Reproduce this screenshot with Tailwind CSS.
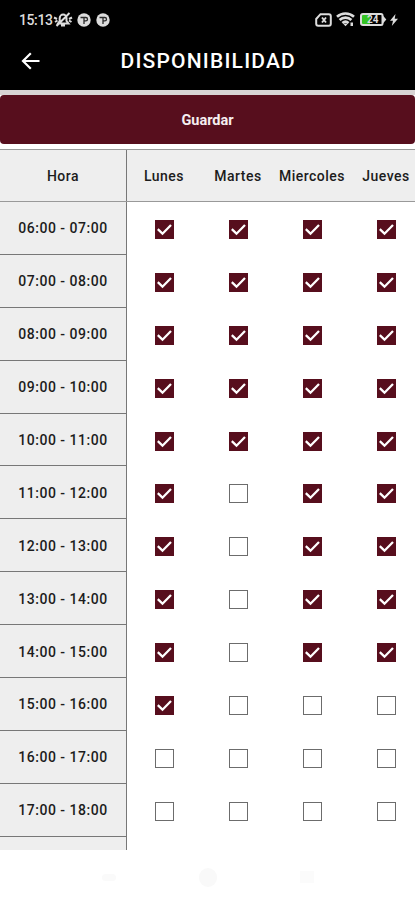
<!DOCTYPE html>
<html lang="es">
<head>
  <meta charset="UTF-8" />
  <meta name="viewport" content="width=device-width, initial-scale=1.0" />
  <title>Disponibilidad</title>
  <script src="https://cdn.jsdelivr.net/npm/@tailwindcss/browser@4"></script>
</head>
<body class="bg-white font-['Roboto',sans-serif] text-[#1c1c1c]">
  <div class="w-[415px] h-[900px] flex flex-col overflow-hidden">

    <!-- Status bar -->
    <div class="h-[39px] shrink-0 bg-black text-[#dcdcdc] flex items-center justify-between pl-[19px] pr-[17px]">
      <div class="flex items-center">
        <span class="w-[33px] text-[14px] leading-none font-medium tracking-[-0.4px] pt-[1px]">15:13</span>
        <svg class="ml-[1px] w-[20px] h-[17px]" viewBox="0 0 20 17" fill="none" stroke="currentColor" stroke-width="2">
          <path d="M5 12.500h10.500l-2-2.500V7a3.400 3.400 0 0 0-6.800 0v3zM8 14.600h4M3.500 15L16.500 2M1 6.500l3 1.500M2 11l2.500-1.500M19 6.500l-3 1.500M18.500 11L16 9.500" />
        </svg>
        <svg class="ml-[4px] w-[14px] h-[14px]" viewBox="0 0 14 14">
          <circle cx="7" cy="7" r="6.700" fill="currentColor" />
          <path d="M3.500 4.500h3.500v6.500M7 4.500h1.800a1.700 1.700 0 0 1 0 3.400H7" fill="none" stroke="#2a2a2a" stroke-width="1.300" />
        </svg>
        <svg class="ml-[5px] w-[14px] h-[14px]" viewBox="0 0 14 14">
          <circle cx="7" cy="7" r="6.700" fill="currentColor" />
          <path d="M3.500 4.500h3.500v6.500M7 4.500h1.800a1.700 1.700 0 0 1 0 3.400H7" fill="none" stroke="#2a2a2a" stroke-width="1.300" />
        </svg>
      </div>
      <div class="flex items-center">
        <svg class="w-[17px] h-[14px]" viewBox="0 0 17 14" fill="none" stroke="currentColor">
          <path d="M5.500 1.200h8.300a2 2 0 0 1 2 2v7.600a2 2 0 0 1-2 2H3.200a2 2 0 0 1-2-2V6z" stroke-width="2" />
          <path d="M7 4.500l4 5M11 4.500l-4 5" stroke-width="1.900" />
        </svg>
        <svg class="ml-[4px] w-[19px] h-[15px]" viewBox="0 0 19 15" fill="none" stroke="currentColor" stroke-width="2.600">
          <path d="M1 4.800a12.500 12.500 0 0 1 17 0M3.600 8a8.500 8.500 0 0 1 11.800 0M6.400 11a4.800 4.800 0 0 1 6.200 0" />
          <path d="M7 11.500h5l-2.500 2.800zM14.500 10.500h2.500v3.500h-2.500z" fill="currentColor" stroke="none" />
        </svg>
        <svg class="ml-[5px] w-[27px] h-[13px]" viewBox="0 0 27 13">
          <rect x="2" y="2" width="8" height="9" fill="#35c424" />
          <path d="M3 1h18a1.500 1.500 0 0 1 1.500 1.500v8A1.500 1.500 0 0 1 21 12H3a2 2 0 0 1-2-2V3a2 2 0 0 1 2-2z" fill="none" stroke="currentColor" stroke-width="2" />
          <path d="M22.500 2l3.800 4.500-3.800 4.500z" fill="currentColor" />
          <text x="7" y="10" font-size="10" font-weight="700" fill="currentColor">24</text>
        </svg>
        <svg class="ml-[3px] w-[8px] h-[12px]" viewBox="0 0 8 12" fill="currentColor">
          <path d="M5.500 0L0 6.800h3L1.800 12 8 4.800H4.700z" />
        </svg>
      </div>
    </div>

    <!-- Title bar -->
    <div class="h-[51px] shrink-0 bg-black text-white flex items-center pb-[7px]">
      <svg class="ml-[21px] w-[19px] h-[18px]" viewBox="0 0 19 18" fill="none" stroke="currentColor" stroke-width="2.200">
        <path d="M18.500 9H2M9.800 1.200L2 9l7.800 7.800" />
      </svg>
      <h1 class="ml-[80.5px] text-[21px] leading-none font-medium tracking-[1.2px] whitespace-nowrap">DISPONIBILIDAD</h1>
    </div>

    <!-- Save button -->
    <div class="h-[59px] shrink-0 bg-white border-t-[5px] border-[#d8d4d4]">
      <button class="block w-full h-[49px] pt-[2px] rounded-[4px] bg-[#570e1d] text-[#f5eef0] text-[14.5px] font-bold">Guardar</button>
    </div>

    <!-- Schedule table -->
    <div class="h-[701px] shrink-0 overflow-hidden">
      <div class="h-[53px] flex bg-[#eeeeee] border-y border-[#999999] text-[14px] font-medium tracking-[0.5px]">
        <div class="w-[127px] shrink-0 border-r border-[#777777] flex items-center justify-center pt-[2px]">Hora</div>
        <div id="days" class="flex"></div>
      </div>
      <div id="rows"></div>
    </div>

    <!-- Navigation bar -->
    <div class="grow bg-white flex items-center justify-center gap-[83px] pt-[4px]">
      <div class="w-[14px] h-[7px] rounded-full bg-[#fafafa]"></div>
      <div class="w-[18px] h-[19px] rounded-full bg-[#f9f9f9]"></div>
      <div class="w-[14px] h-[12px] bg-[#fbfbfb]"></div>
    </div>
  </div>

  <script>
    const days = ['Lunes', 'Martes', 'Miercoles', 'Jueves'];
    // one flag per day, 1 = available
    const schedule = [
      ['06:00 - 07:00', '1111'],
      ['07:00 - 08:00', '1111'],
      ['08:00 - 09:00', '1111'],
      ['09:00 - 10:00', '1111'],
      ['10:00 - 11:00', '1111'],
      ['11:00 - 12:00', '1011'],
      ['12:00 - 13:00', '1011'],
      ['13:00 - 14:00', '1011'],
      ['14:00 - 15:00', '1011'],
      ['15:00 - 16:00', '1000'],
      ['16:00 - 17:00', '0000'],
      ['17:00 - 18:00', '0000'],
      ['', '']
    ];

    const checked = `
      <svg class="w-[19px] h-[19px]" viewBox="0 0 19 19">
        <rect width="19" height="19" fill="#570e1d" />
        <path d="M2.800 9.200l4.700 4.500 8.500-8.700" fill="none" stroke="#fff" stroke-width="2.300" />
      </svg>`;
    const unchecked = '<div class="w-[19px] h-[19px] border-[1.5px] border-[#6c6c6c] bg-white"></div>';

    document.getElementById('days').innerHTML = days
      .map(day => `<div class="w-[74px] flex items-center justify-center pt-[2px] whitespace-nowrap">${day}</div>`)
      .join('');

    document.getElementById('rows').innerHTML = schedule.map(([hour, flags]) => `
      <div class="h-[52.9px] flex">
        <div class="w-[127px] shrink-0 bg-[#eeeeee] border-r border-b border-[#777777] flex items-center justify-center pt-[2px] text-[14px] font-medium tracking-[0.5px]">${hour}</div>
        ${[...flags].map(flag => `<div class="w-[74px] shrink-0 flex items-center justify-center pt-[2px]">${flag === '1' ? checked : unchecked}</div>`).join('')}
      </div>`).join('');
  </script>
</body>
</html>
